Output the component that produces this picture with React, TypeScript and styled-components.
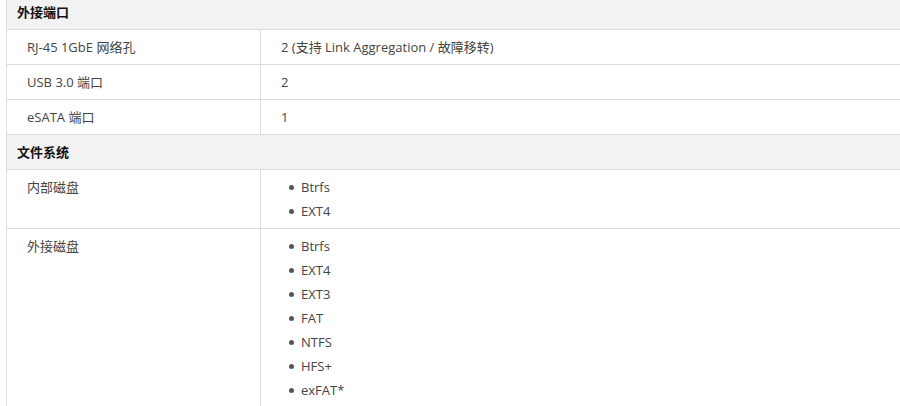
import React from "react";
import styled, { createGlobalStyle } from "styled-components";

const Global = createGlobalStyle`
  html, body { margin: 0; padding: 0; overflow: hidden; background: #fff; }
  body { font-family: "Open Sans", "Noto Sans CJK SC", sans-serif; }
`;

const Page = styled.div`
  box-sizing: border-box;
  width: 900px;
  padding-left: 6px;
  margin-top: -5px;
`;

const Table = styled.table`
  width: 100%;
  table-layout: fixed;
  border-collapse: separate;
  border-spacing: 0;
  border-left: 1px solid #dcdcdc;
  font-size: 13px;
  line-height: 24px;
  color: #444;
`;

const LabelCol = styled.col`
  width: 254px;
`;

const SectionCell = styled.td`
  background: #f2f2f2;
  color: #111;
  font-weight: 700;
  padding: 5px 10px;
  border-bottom: 1px solid #dcdcdc;
`;

const LabelCell = styled.td`
  box-sizing: border-box;
  padding: 5px 20px;
  vertical-align: top;
  border-right: 1px solid #dcdcdc;
  border-bottom: 1px solid #dcdcdc;
`;

const ValueCell = styled.td`
  padding: 5px 20px;
  vertical-align: top;
  border-bottom: 1px solid #dcdcdc;
`;

const List = styled.ul`
  list-style: none;
  margin: 0;
  padding: 0 0 0 20px;
`;

const Item = styled.li`
  position: relative;
  &::before {
    content: "";
    position: absolute;
    left: -12px;
    top: 10px;
    width: 5px;
    height: 5px;
    border-radius: 50%;
    background: #555;
  }
`;

type Row = { label: string; value: string | string[] };
type Section = { title: string; rows: Row[] };

const sections: Section[] = [
  {
    title: "外接端口",
    rows: [
      { label: "RJ-45 1GbE 网络孔", value: "2 (支持 Link Aggregation / 故障移转)" },
      { label: "USB 3.0 端口", value: "2" },
      { label: "eSATA 端口", value: "1" },
    ],
  },
  {
    title: "文件系统",
    rows: [
      { label: "内部磁盘", value: ["Btrfs", "EXT4"] },
      { label: "外接磁盘", value: ["Btrfs", "EXT4", "EXT3", "FAT", "NTFS", "HFS+", "exFAT*"] },
    ],
  },
];

export default function App() {
  return (
    <Page>
      <Global />
      <Table>
        <colgroup>
          <LabelCol />
          <col />
        </colgroup>
        <tbody>
          {sections.map((s) => (
            <React.Fragment key={s.title}>
              <tr>
                <SectionCell colSpan={2}>{s.title}</SectionCell>
              </tr>
              {s.rows.map((r) => (
                <tr key={r.label}>
                  <LabelCell>{r.label}</LabelCell>
                  <ValueCell>
                    {Array.isArray(r.value) ? (
                      <List>
                        {r.value.map((v) => (
                          <Item key={v}>{v}</Item>
                        ))}
                      </List>
                    ) : (
                      r.value
                    )}
                  </ValueCell>
                </tr>
              ))}
            </React.Fragment>
          ))}
        </tbody>
      </Table>
    </Page>
  );
}
